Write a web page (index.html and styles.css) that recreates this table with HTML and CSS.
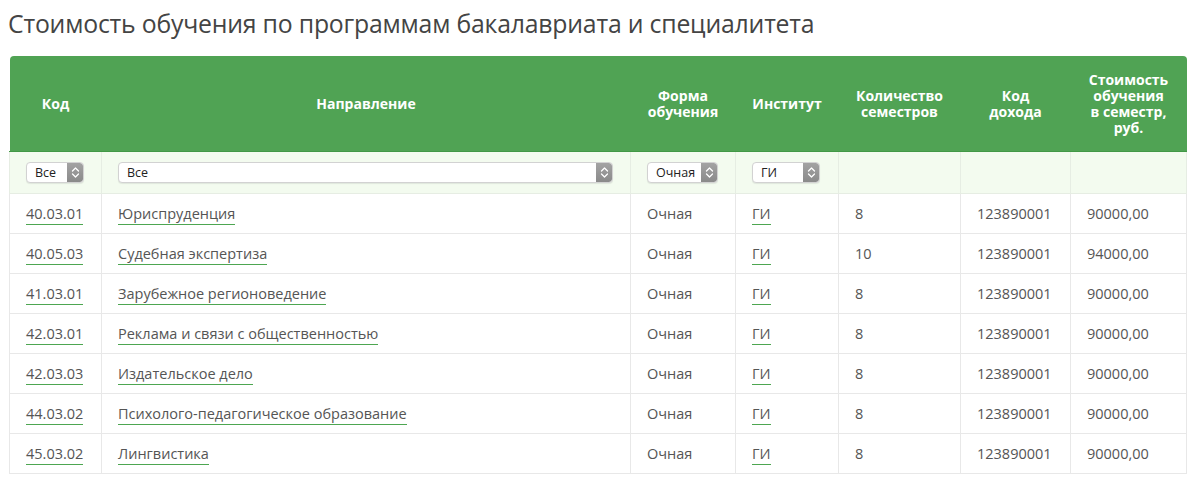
FILE: index.html
```html
<!DOCTYPE html>
<html lang="ru">
<head>
<meta charset="utf-8">
<title>Стоимость обучения</title>
<link rel="stylesheet" href="styles.css">
</head>
<body>
<h1 class="title">Стоимость обучения по программам бакалавриата и специалитета</h1>
<table class="costs">
  <colgroup>
    <col class="c-code"><col class="c-dir"><col class="c-form"><col class="c-inst"><col class="c-sem"><col class="c-inc"><col class="c-cost">
  </colgroup>
  <thead>
    <tr class="head">
      <th>Код</th>
      <th>Направление</th>
      <th><span class="ln">Форма</span><span class="ln">обучения</span></th>
      <th>Институт</th>
      <th><span class="ln">Количество</span><span class="ln">семестров</span></th>
      <th><span class="ln">Код</span><span class="ln">дохода</span></th>
      <th><span class="ln">Стоимость</span><span class="ln">обучения</span><span class="ln">в семестр,</span><span class="ln">руб.</span></th>
    </tr>
    <tr class="filters">
      <td><span class="sel sel-code"><span class="sel-text">Все</span><span class="sel-btn"><svg width="9" height="13" viewBox="0 0 9 13"><path d="M1.5 5 4.5 2 7.5 5M1.5 8 4.5 11 7.5 8" fill="none" stroke="#fff" stroke-width="1.3" stroke-linecap="round" stroke-linejoin="round"/></svg></span></span></td>
      <td><span class="sel sel-dir"><span class="sel-text">Все</span><span class="sel-btn"><svg width="9" height="13" viewBox="0 0 9 13"><path d="M1.5 5 4.5 2 7.5 5M1.5 8 4.5 11 7.5 8" fill="none" stroke="#fff" stroke-width="1.3" stroke-linecap="round" stroke-linejoin="round"/></svg></span></span></td>
      <td><span class="sel sel-form"><span class="sel-text">Очная</span><span class="sel-btn"><svg width="9" height="13" viewBox="0 0 9 13"><path d="M1.5 5 4.5 2 7.5 5M1.5 8 4.5 11 7.5 8" fill="none" stroke="#fff" stroke-width="1.3" stroke-linecap="round" stroke-linejoin="round"/></svg></span></span></td>
      <td><span class="sel sel-inst"><span class="sel-text">ГИ</span><span class="sel-btn"><svg width="9" height="13" viewBox="0 0 9 13"><path d="M1.5 5 4.5 2 7.5 5M1.5 8 4.5 11 7.5 8" fill="none" stroke="#fff" stroke-width="1.3" stroke-linecap="round" stroke-linejoin="round"/></svg></span></span></td>
      <td></td>
      <td></td>
      <td></td>
    </tr>
  </thead>
  <tbody>
    <tr><td><a href="#">40.03.01</a></td><td><a href="#">Юриспруденция</a></td><td>Очная</td><td><a href="#">ГИ</a></td><td>8</td><td>123890001</td><td>90000,00</td></tr>
    <tr><td><a href="#">40.05.03</a></td><td><a href="#">Судебная экспертиза</a></td><td>Очная</td><td><a href="#">ГИ</a></td><td>10</td><td>123890001</td><td>94000,00</td></tr>
    <tr><td><a href="#">41.03.01</a></td><td><a href="#">Зарубежное регионоведение</a></td><td>Очная</td><td><a href="#">ГИ</a></td><td>8</td><td>123890001</td><td>90000,00</td></tr>
    <tr><td><a href="#">42.03.01</a></td><td><a href="#">Реклама и связи с общественностью</a></td><td>Очная</td><td><a href="#">ГИ</a></td><td>8</td><td>123890001</td><td>90000,00</td></tr>
    <tr><td><a href="#">42.03.03</a></td><td><a href="#">Издательское дело</a></td><td>Очная</td><td><a href="#">ГИ</a></td><td>8</td><td>123890001</td><td>90000,00</td></tr>
    <tr><td><a href="#">44.03.02</a></td><td><a href="#">Психолого-педагогическое образование</a></td><td>Очная</td><td><a href="#">ГИ</a></td><td>8</td><td>123890001</td><td>90000,00</td></tr>
    <tr><td><a href="#">45.03.02</a></td><td><a href="#">Лингвистика</a></td><td>Очная</td><td><a href="#">ГИ</a></td><td>8</td><td>123890001</td><td>90000,00</td></tr>
  </tbody>
</table>
</body>
</html>
```

FILE: styles.css
```css
html, body {
  margin: 0;
  padding: 0;
  background: #fff;
}
body {
  padding: 8px 8px 0 8px;
  font-family: "Open Sans", "Noto Sans", sans-serif;
  color: #555;
}
.title {
  margin: 0;
  font-size: 24.8px;
  line-height: 30px;
  font-weight: 400;
  color: #444;
  letter-spacing: -0.2px;
}
.costs {
  margin-top: 18px;
  margin-left: 1px;
  width: 1177px;
  border-collapse: collapse;
  table-layout: fixed;
  font-size: 14.5px;
}
.c-code { width: 92px; }
.c-dir { width: 529px; }
.c-form { width: 105px; }
.c-inst { width: 103px; }
.c-sem { width: 122px; }
.c-inc { width: 110px; }
.c-cost { width: 116px; }

.head th {
  background: #50a354;
  color: #fff;
  font-weight: 700;
  font-size: 14px;
  line-height: 16px;
  height: 95px;
  padding: 0 8px;
  text-align: center;
  vertical-align: middle;
  border-bottom: 1px solid #429846;
}
.head .ln {
  display: block;
  height: 16px;
  line-height: 16px;
}
.head th:first-child { border-top-left-radius: 4px; }
.head th:last-child { border-top-right-radius: 4px; }

.filters td {
  background: #f3fbef;
  height: 41px;
  padding: 0 16px;
  border: 1px solid #e6ede3;
  border-top: none;
  vertical-align: middle;
}
tbody td {
  height: 39px;
  padding: 0 16px;
  border: 1px solid #e8e8e8;
  vertical-align: middle;
  line-height: 18px;
}
a {
  color: #555;
  text-decoration: none;
  border-bottom: 1px solid #4da651;
  padding-bottom: 1px;
}

.sel {
  display: flex;
  align-items: stretch;
  height: 19px;
  background: #fff;
  border: 1px solid #d2d2d2;
  border-radius: 4px;
  box-shadow: 0 1px 1px rgba(0,0,0,0.08);
  font-size: 12.5px;
  color: #222;
  overflow: hidden;
}
.sel-text {
  flex: 1;
  padding-left: 8px;
  line-height: 19px;
}
.sel-btn {
  width: 16px;
  display: flex;
  align-items: center;
  justify-content: center;
  background: linear-gradient(#a3a3a3, #8a8a8a);
  border-radius: 0 3px 3px 0;
}
.sel-code { width: 56px; }
.sel-dir { width: 493px; }
.sel-form { width: 69px; }
.sel-inst { width: 66px; }
```
